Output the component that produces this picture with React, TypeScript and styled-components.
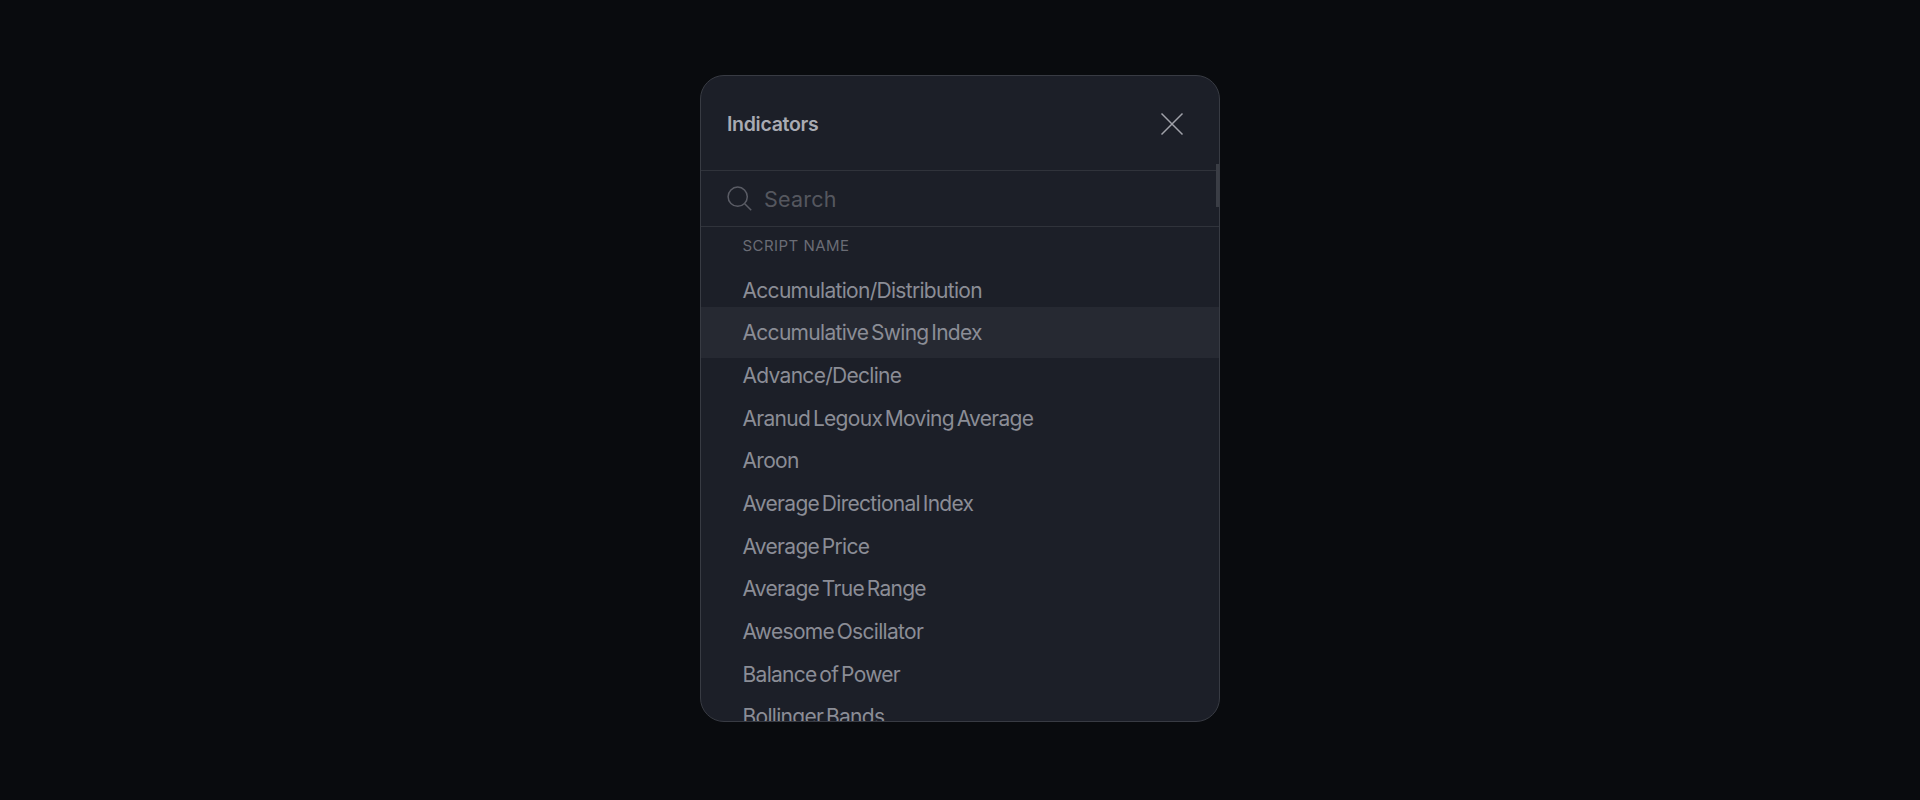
import React from "react";
import styled, { createGlobalStyle } from "styled-components";

const Global = createGlobalStyle`
  html, body { margin: 0; padding: 0; height: 100%; background: #090b0e; }
  #root { height: 100%; }
`;

const Page = styled.div`
  height: 800px;
  display: flex;
  justify-content: center;
  align-items: flex-start;
  padding-top: 75px;
  box-sizing: border-box;
  font-family: Inter, "Liberation Sans", sans-serif;
`;

const Panel = styled.section`
  position: relative;
  width: 520px;
  height: 647px;
  box-sizing: border-box;
  background: #1c1f28;
  border: 1px solid #383b43;
  border-radius: 24px;
  display: flex;
  flex-direction: column;
  overflow: hidden;
`;

const Header = styled.header`
  height: 94px;
  flex: none;
  box-sizing: border-box;
  padding: 1px 26px 0;
  display: flex;
  align-items: center;
  justify-content: space-between;
`;

const Title = styled.h2`
  margin: 0;
  font-size: 19.5px;
  font-weight: 600;
  letter-spacing: -0.3px;
  color: #a9abb3;
`;

const Close = styled.button`
  all: unset;
  display: flex;
  color: #a0a2aa;
  margin-right: 9px;
`;

const SearchBar = styled.div`
  height: 57px;
  flex: none;
  box-sizing: border-box;
  border-top: 1px solid #30333b;
  border-bottom: 1px solid #30333b;
  padding: 0 26px;
  display: flex;
  align-items: center;
  gap: 12px;
  color: #5a5c65;
`;

const SearchInput = styled.input`
  all: unset;
  flex: 1;
  font-size: 21.5px;
  letter-spacing: 0.2px;
  color: #5a5c65;
  &::placeholder { color: #55575f; opacity: 1; }
`;

const ScrollThumb = styled.div`
  position: absolute;
  right: 0;
  top: 88px;
  width: 3px;
  height: 43px;
  background: #3a3d45;
`;

const Body = styled.div`
  flex: 1;
  min-height: 0;
  overflow: hidden;
  padding: 0 41.5px;
`;

const Section = styled.div`
  height: 36px;
  display: flex;
  align-items: center;
  font-size: 15px;
  letter-spacing: 0.45px;
  color: #6a6c75;
`;

const List = styled.ul`
  list-style: none;
  margin: 0;
  padding: 6px 0 0;
`;

const Row = styled.li<{ $active?: boolean }>`
  position: relative;
  height: 42.67px;
  display: flex;
  align-items: center;
  font-size: 21px;
  letter-spacing: -0.7px;
  word-spacing: -2.5px;
  white-space: nowrap;
  color: #8b8d96;
  &::before {
    content: "";
    display: ${(p) => (p.$active ? "block" : "none")};
    position: absolute;
    left: -42px;
    right: -42px;
    top: -5px;
    bottom: -4px;
    background: #262932;
  }
`;

const RowLabel = styled.span`
  position: relative;
`;

const items = [
  "Accumulation/Distribution",
  "Accumulative Swing Index",
  "Advance/Decline",
  "Aranud Legoux Moving Average",
  "Aroon",
  "Average Directional Index",
  "Average Price",
  "Average True Range",
  "Awesome Oscillator",
  "Balance of Power",
  "Bollinger Bands",
];

export default function App() {
  return (
    <>
      <Global />
      <Page>
        <Panel>
          <Header>
            <Title>Indicators</Title>
            <Close aria-label="Close">
              <svg width="24" height="24" viewBox="0 0 24 24" fill="none" stroke="currentColor" strokeWidth="1.5">
                <path d="M1.5 1.5 22.5 22.5M22.5 1.5 1.5 22.5" />
              </svg>
            </Close>
          </Header>
          <SearchBar>
            <svg width="25" height="25" viewBox="0 0 25 25" fill="none" stroke="currentColor" strokeWidth="1.5">
              <circle cx="10.7" cy="10.7" r="9.6" />
              <path d="M17.7 17.7 24.2 24.2" />
            </svg>
            <SearchInput placeholder="Search" />
          </SearchBar>
          <ScrollThumb />
          <Body>
            <Section>SCRIPT NAME</Section>
            <List>
              {items.map((t, i) => (
                <Row key={t} $active={i === 1}>
                  <RowLabel>{t}</RowLabel>
                </Row>
              ))}
            </List>
          </Body>
        </Panel>
      </Page>
    </>
  );
}
